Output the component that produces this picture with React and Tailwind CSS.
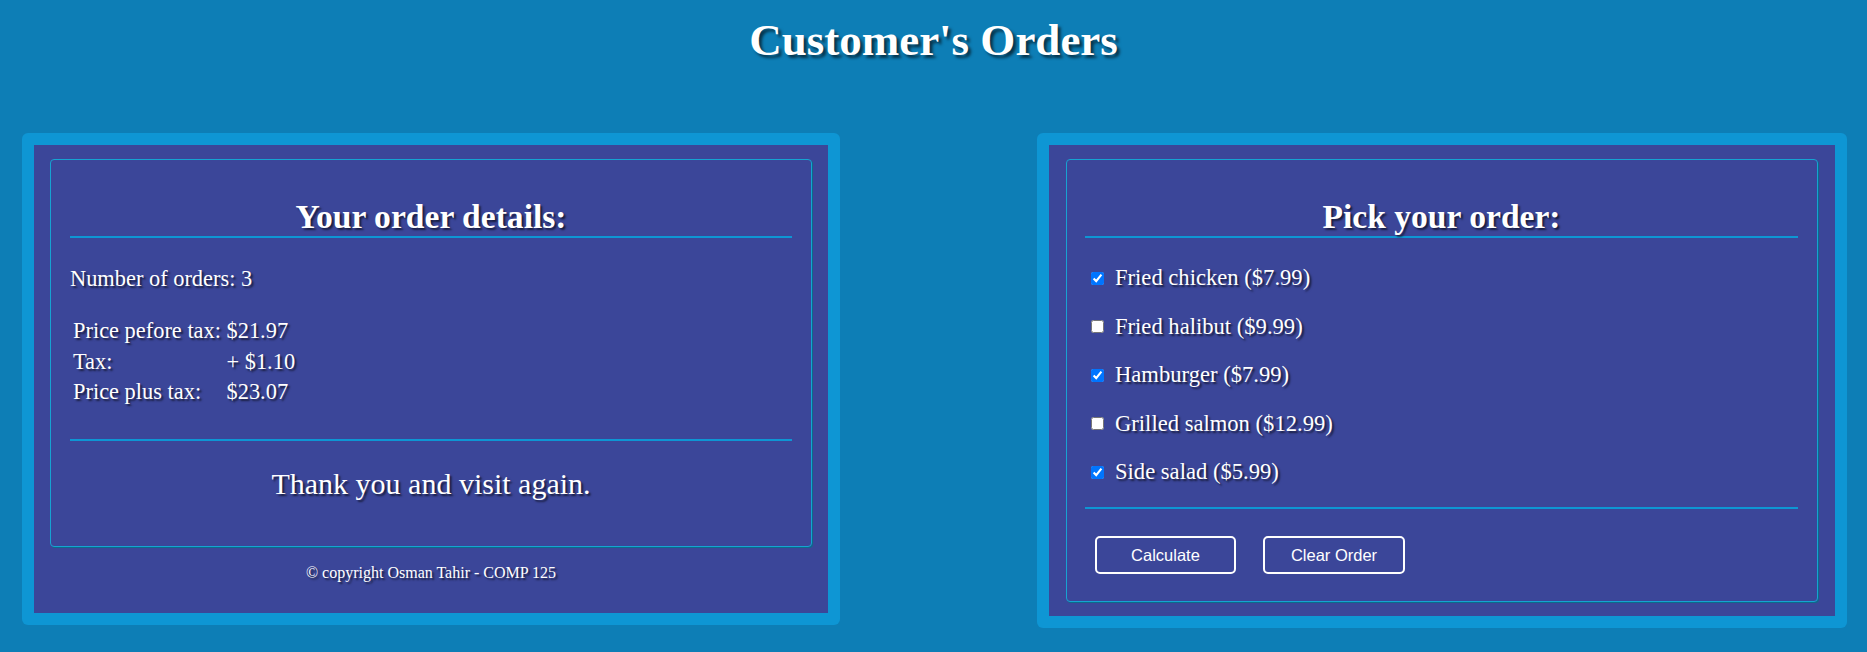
const items = [
    { name: "Fried chicken", price: "7.99", checked: true },
    { name: "Fried halibut", price: "9.99", checked: false },
    { name: "Hamburger", price: "7.99", checked: true },
    { name: "Grilled salmon", price: "12.99", checked: false },
    { name: "Side salad", price: "5.99", checked: true },
];

const shadow = "[text-shadow:2px_2px_2px_rgba(0,0,0,0.6)]";

const Rule = () => <div className="h-[2px] bg-[#0e96d4]"></div>;

const OrderDetails = () => {
    return (
        <div className="w-[818px] rounded-md bg-[#0e96d4] p-[12px]">
            <div className="bg-[#3b4699] px-[16px] pt-[14px] pb-[30px]">
                <div className="rounded-[4px] border border-[#16a3d2] shadow-[1px_1px_0_#0b6b8a] px-[19px] pb-[45px]">
                    <h2 className={`pt-[38px] text-center text-[33.6px] font-bold leading-[38px] ${shadow}`}>Your order details:</h2>
                    <Rule />
                    <p className={`mt-[28px] text-[22.4px] leading-[26px] ${shadow}`}>Number of orders: 3</p>
                    <div className={`mt-[24px] grid grid-cols-[153.5px_auto] pl-[3px] text-[22.4px] leading-[30.5px] ${shadow}`}>
                        <span>Price pefore tax:</span>
                        <span>$21.97</span>
                        <span>Tax:</span>
                        <span>+ $1.10</span>
                        <span>Price plus tax:</span>
                        <span>$23.07</span>
                    </div>
                    <div className="mt-[31px]">
                        <Rule />
                    </div>
                    <p className={`mt-[26px] text-center text-[30px] leading-[34px] ${shadow}`}>Thank you and visit again.</p>
                </div>
                <p className={`mt-[16px] text-center text-[16px] leading-[20px] ${shadow}`}>© copyright Osman Tahir - COMP 125</p>
            </div>
        </div>
    )
}

const PickOrder = () => {
    return (
        <div className="w-[810px] rounded-md bg-[#0e96d4] p-[12px]">
            <div className="bg-[#3b4699] px-[17px] pt-[14px] pb-[14px]">
                <div className="rounded-[4px] border border-[#16a3d2] shadow-[1px_1px_0_#0b6b8a] pl-[18px] pr-[19px] pb-[27px]">
                    <h2 className={`pt-[38px] text-center text-[33.6px] font-bold leading-[38px] ${shadow}`}>Pick your order:</h2>
                    <Rule />
                    <div className="mt-[27px] flex flex-col gap-[22.6px]">
                        {
                            items.map((item, i) => {
                                return (
                                    <label key={i} className="flex h-[26px] items-center">
                                        <input type="checkbox" defaultChecked={item.checked} className="ml-[6px] mr-[11px] h-[13px] w-[13px]" />
                                        <span className={`text-[22.6px] leading-[26px] ${shadow}`}>{item.name} (${item.price})</span>
                                    </label>
                                )
                            })
                        }
                    </div>
                    <div className="mt-[22px]">
                        <Rule />
                    </div>
                    <div className="mt-[27px] ml-[10px] flex gap-[27px] font-['Liberation_Sans',Arial,sans-serif]">
                        <button className="h-[38px] w-[141px] rounded-[5px] border-2 border-white text-[16.5px] text-white">Calculate</button>
                        <button className="h-[38px] w-[142px] rounded-[5px] border-2 border-white text-[16.5px] text-white">Clear Order</button>
                    </div>
                </div>
            </div>
        </div>
    )
}

const App = () => {
    return (
        <div className="min-h-[652px] w-full overflow-hidden bg-[#0d7eb6] font-['Liberation_Serif','Times_New_Roman',serif] text-white">
            <h1 className={`pt-[14px] text-center text-[45px] font-bold leading-[52px] [text-shadow:3px_3px_3px_rgba(0,0,0,0.6)]`}>Customer's Orders</h1>
            <div className="mt-[67px] flex items-start justify-between pl-[22px] pr-[20px]">
                <OrderDetails />
                <PickOrder />
            </div>
        </div>
    )
}

export default App;
